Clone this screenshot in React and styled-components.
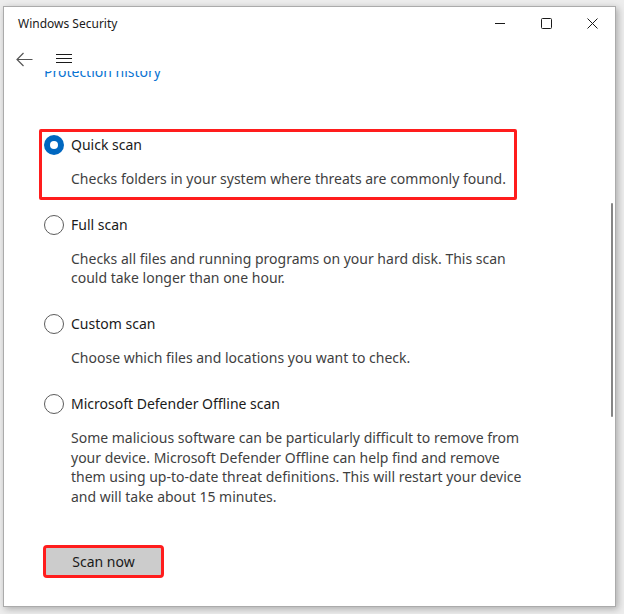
import React from "react";
import styled, { createGlobalStyle } from "styled-components";

const Global = createGlobalStyle`
  html, body { margin: 0; padding: 0; }
  body {
    width: 624px;
    height: 614px;
    overflow: hidden;
    background: #ededed;
    font-family: "Noto Sans", "Open Sans", Arial, sans-serif;
  }
`;

const Stage = styled.div`
  padding: 6px 0 0 3px;
`;

const Window = styled.div`
  position: relative;
  width: 611px;
  height: 599px;
  background: #ffffff;
  border: 1px solid #ababab;
  box-shadow: 2px 2px 7px rgba(0, 0, 0, 0.28);
  display: flex;
  flex-direction: column;
  overflow: hidden;
`;

const TitleBar = styled.div`
  height: 32px;
  display: flex;
  align-items: center;
  padding-left: 14px;
  flex-shrink: 0;
`;

const Title = styled.div`
  flex: 1;
  font-size: 12px;
  color: #1a1a1a;
`;

const Ctrl = styled.div`
  width: 46px;
  height: 32px;
  display: flex;
  align-items: center;
  justify-content: center;
  color: #1a1a1a;
`;

const NavBar = styled.div`
  height: 24px;
  padding-top: 8px;
  display: flex;
  align-items: center;
  flex-shrink: 0;
  position: relative;
  z-index: 1;
  background: #fff;
`;

const NavBtn = styled.div`
  width: ${(p) => p.w}px;
  display: flex;
  align-items: center;
  justify-content: center;
  margin-left: ${(p) => p.ml}px;
`;

const Content = styled.div`
  flex: 1;
  overflow: hidden;
  padding-left: 40px;
  color: #1a1a1a;
  font-size: 14px;
  line-height: 20px;
`;

const Link = styled.div`
  margin-top: -9px;
  color: #0a74d2;
  font-size: 14px;
  line-height: 20px;
`;

const Options = styled.div`
  margin-top: 53px;
  display: flex;
  flex-direction: column;
  gap: 26px;
`;

const Option = styled.div`
  position: relative;
  width: fit-content;
  &::before {
    content: "";
    display: ${(p) => (p.$hl ? "block" : "none")};
    position: absolute;
    top: -6px;
    left: -5px;
    right: -11px;
    bottom: -11px;
    border: 3px solid #ff1d1d;
    border-radius: 2px;
  }
`;

const OptionRow = styled.div`
  display: flex;
  align-items: center;
  gap: 7px;
  height: 20px;
`;

const Radio = styled.span`
  width: 20px;
  height: 20px;
  box-sizing: border-box;
  border-radius: 50%;
  flex-shrink: 0;
  display: flex;
  align-items: center;
  justify-content: center;
  border: ${(p) => (p.$on ? "none" : "1px solid #5c5c5c")};
  background: ${(p) => (p.$on ? "#0067c0" : "#fff")};
  &::after {
    content: "";
    display: ${(p) => (p.$on ? "block" : "none")};
    width: 8px;
    height: 8px;
    border-radius: 50%;
    background: #fff;
  }
`;

const Label = styled.span`
  color: #1a1a1a;
`;

const Desc = styled.div`
  margin-top: 14px;
  margin-left: 27px;
  max-width: 462px;
  line-height: 19.7px;
  color: #3f3f3f;
`;

const ScanBtn = styled.button`
  margin: 41px 0 0 2px;
  width: 115px;
  height: 27px;
  background: #cccccc;
  border: none;
  outline: 3px solid #ff1d1d;
  outline-offset: 0;
  border-radius: 1px;
  font-family: inherit;
  font-size: 14px;
  color: #1a1a1a;
  padding: 0;
`;

const Scrollbar = styled.div`
  position: absolute;
  right: 2px;
  top: 196px;
  width: 2px;
  height: 214px;
  background: #858585;
  border-radius: 1px;
`;

const options = [
  {
    label: "Quick scan",
    desc: "Checks folders in your system where threats are commonly found.",
    on: true,
  },
  {
    label: "Full scan",
    desc: "Checks all files and running programs on your hard disk. This scan could take longer than one hour.",
  },
  {
    label: "Custom scan",
    desc: "Choose which files and locations you want to check.",
  },
  {
    label: "Microsoft Defender Offline scan",
    desc: "Some malicious software can be particularly difficult to remove from your device. Microsoft Defender Offline can help find and remove them using up-to-date threat definitions. This will restart your device and will take about 15 minutes.",
  },
];

export default function App() {
  return (
    <>
      <Global />
      <Stage>
        <Window>
          <TitleBar>
            <Title>Windows Security</Title>
            <Ctrl>
              <svg width="10" height="10" viewBox="0 0 10 10">
                <path d="M0 5.5h10" stroke="#1a1a1a" strokeWidth="1" />
              </svg>
            </Ctrl>
            <Ctrl>
              <svg width="11" height="11" viewBox="0 0 11 11">
                <rect x="0.5" y="0.5" width="10" height="10" rx="1" fill="none" stroke="#1a1a1a" strokeWidth="1" />
              </svg>
            </Ctrl>
            <Ctrl>
              <svg width="11" height="11" viewBox="0 0 11 11">
                <path d="M0.5 0.5L10.5 10.5M10.5 0.5L0.5 10.5" stroke="#1a1a1a" strokeWidth="1" />
              </svg>
            </Ctrl>
          </TitleBar>
          <NavBar>
            <NavBtn w={18} ml={11}>
              <svg width="17" height="15" viewBox="0 0 17 15">
                <path d="M16.5 7.5H1M7.5 1L1 7.5L7.5 14" fill="none" stroke="#555" strokeWidth="1.2" />
              </svg>
            </NavBtn>
            <NavBtn w={16} ml={23}>
              <svg width="16" height="10" viewBox="0 0 16 10">
                <path d="M0 0.5h16M0 4.5h16M0 8.5h16" stroke="#1a1a1a" strokeWidth="1" />
              </svg>
            </NavBtn>
          </NavBar>
          <Content>
            <Link>Protection history</Link>
            <Options>
              {options.map((o) => (
                <Option key={o.label} $hl={o.on}>
                  <OptionRow>
                    <Radio $on={o.on} />
                    <Label>{o.label}</Label>
                  </OptionRow>
                  <Desc>{o.desc}</Desc>
                </Option>
              ))}
            </Options>
            <ScanBtn>Scan now</ScanBtn>
          </Content>
          <Scrollbar />
        </Window>
      </Stage>
    </>
  );
}
